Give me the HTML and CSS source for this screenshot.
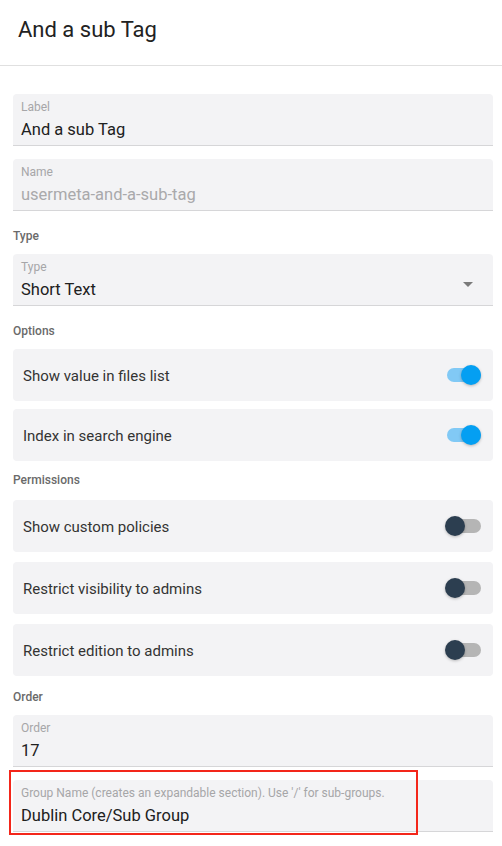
FILE: index.html
```html
<!DOCTYPE html>
<html>
<head>
<meta charset="utf-8">
<link rel="stylesheet" href="styles.css">
</head>
<body>
<div class="page">
  <header class="header"><h1 class="title">And a sub Tag</h1></header>
  <main class="content">
    <div class="field">
      <div class="field-label">Label</div>
      <div class="field-value">And a sub Tag</div>
    </div>
    <div class="field field-gap">
      <div class="field-label">Name</div>
      <div class="field-value disabled">usermeta-and-a-sub-tag</div>
    </div>

    <div class="section">Type</div>
    <div class="field select">
      <div class="field-label">Type</div>
      <div class="field-value">Short Text</div>
      <span class="arrow"></span>
    </div>

    <div class="section">Options</div>
    <div class="toggle-row">
      <span class="toggle-text">Show value in files list</span>
      <span class="switch on"><span class="track"></span><span class="thumb"></span></span>
    </div>
    <div class="toggle-row gap-8">
      <span class="toggle-text">Index in search engine</span>
      <span class="switch on"><span class="track"></span><span class="thumb"></span></span>
    </div>

    <div class="section section-tight">Permissions</div>
    <div class="toggle-row">
      <span class="toggle-text">Show custom policies</span>
      <span class="switch"><span class="track"></span><span class="thumb"></span></span>
    </div>
    <div class="toggle-row gap-10">
      <span class="toggle-text">Restrict visibility to admins</span>
      <span class="switch"><span class="track"></span><span class="thumb"></span></span>
    </div>
    <div class="toggle-row gap-10">
      <span class="toggle-text">Restrict edition to admins</span>
      <span class="switch"><span class="track"></span><span class="thumb"></span></span>
    </div>

    <div class="section section-order">Order</div>
    <div class="field">
      <div class="field-label">Order</div>
      <div class="field-value">17</div>
    </div>
    <div class="field field-gap highlighted">
      <div class="field-label">Group Name (creates an expandable section). Use '/' for sub-groups.</div>
      <div class="field-value">Dublin Core/Sub Group</div>
      <span class="highlight-box"></span>
    </div>
  </main>
</div>
</body>
</html>
```
FILE: styles.css
```css
* { box-sizing: border-box; }
html, body {
  margin: 0;
  padding: 0;
  background: #ffffff;
  font-family: Roboto, "Noto Sans", Arial, sans-serif;
  color: #222;
}
.page { width: 502px; min-height: 846px; }
.header {
  height: 66px;
  border-bottom: 1px solid #e0e0e0;
  padding: 0 18px;
  display: flex;
  align-items: center;
}
.title {
  margin: 0;
  margin-top: -7px;
  font-size: 22px;
  font-weight: 400;
  color: #222;
}
.content {
  padding: 28px 9px 20px 13px;
  display: flex;
  flex-direction: column;
}
.field {
  position: relative;
  height: 52px;
  flex: none;
  background: #f3f3f5;
  border-bottom: 1px solid #d6d6d8;
  border-radius: 4px 4px 0 0;
  padding: 6px 8px 0 8px;
}
.field-gap { margin-top: 13px; }
.field-label {
  font-size: 12px;
  line-height: 14px;
  color: #a6a6a8;
  white-space: nowrap;
}
.field-value {
  margin-top: 6px;
  font-size: 16.5px;
  line-height: 20px;
  color: #202020;
}
.field-value.disabled { color: #a9a9ab; }
.arrow {
  position: absolute;
  right: 20px;
  top: 28px;
  width: 0;
  height: 0;
  border-left: 5px solid transparent;
  border-right: 5px solid transparent;
  border-top: 5px solid #7a7a7a;
}
.section {
  margin-top: 17px;
  margin-bottom: 10px;
  font-size: 12px;
  line-height: 16px;
  font-weight: 500;
  color: #6a6a6a;
}
.section-tight { margin-top: 11px; margin-bottom: 12px; }
.section-order { margin-top: 13px; }
.toggle-row {
  height: 52px;
  flex: none;
  background: #f3f3f5;
  border-radius: 4px;
  padding: 1px 12px 0 10px;
  display: flex;
  align-items: center;
  justify-content: space-between;
}
.gap-8 { margin-top: 8px; }
.gap-10 { margin-top: 10px; }
.toggle-text {
  font-size: 15px;
  color: #333;
}
.switch {
  position: relative;
  width: 34px;
  height: 20px;
  display: block;
  margin-top: -1px;
}
.track {
  position: absolute;
  left: 0;
  top: 3px;
  width: 34px;
  height: 14px;
  border-radius: 7px;
  background: #b5b5b5;
}
.thumb {
  position: absolute;
  top: 0;
  left: -2px;
  width: 20px;
  height: 20px;
  border-radius: 50%;
  background: #2c3e50;
  box-shadow: 0 1px 3px rgba(0,0,0,0.25);
}
.switch.on .track { background: #81c9f5; }
.switch.on .thumb { left: 14px; background: #049ff2; }
.highlight-box {
  position: absolute;
  left: -4px;
  top: -10px;
  width: 409px;
  height: 65px;
  border: 2px solid #f3261a;
  pointer-events: none;
}
```
